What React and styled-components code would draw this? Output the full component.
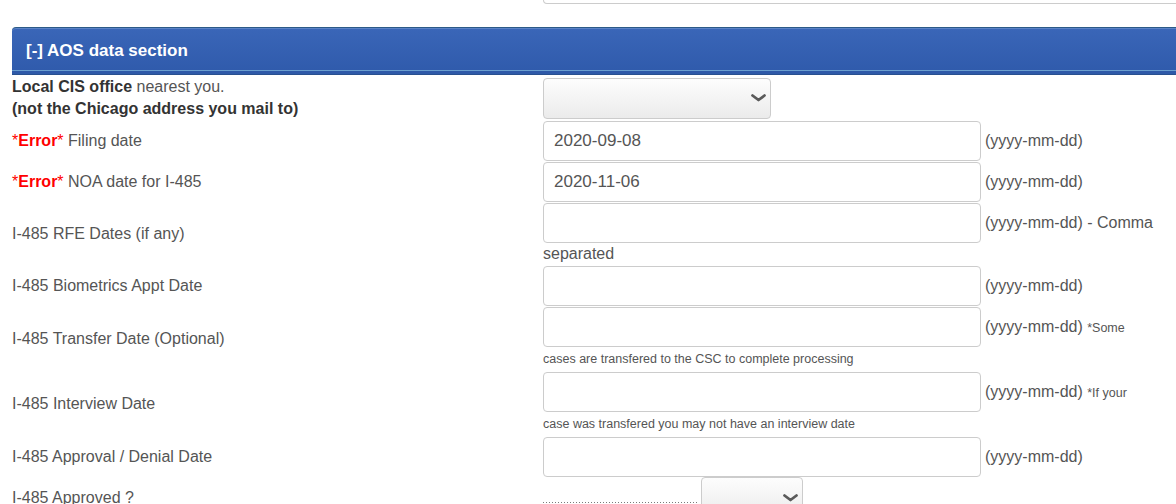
import React from 'react';
import styled, { createGlobalStyle } from 'styled-components';

const GlobalStyle = createGlobalStyle`
  html, body {
    margin: 0;
    padding: 0;
    background: #fff;
    overflow: hidden;
  }
  body {
    font-family: "Liberation Sans", Arial, sans-serif;
    font-size: 16px;
    color: #555;
  }
`;

const Page = styled.div`
  width: 1230px;
  padding-left: 12px;
`;

const PrevRow = styled.div`
  display: flex;
  margin-bottom: 23px;
`;

const PrevBox = styled.div`
  margin-left: 531px;
  flex: 1;
  height: 3px;
  border: 1px solid #ccc;
  border-top: none;
  border-radius: 0 0 0 4px;
`;

const SectionHeader = styled.div`
  box-sizing: border-box;
  height: 48px;
  display: flex;
  align-items: center;
  padding-left: 14px;
  border-radius: 4px 0 0 0;
  border-top: 1px solid #2c5a88;
  border-bottom: 1px solid #28508f;
  background: linear-gradient(to bottom, #3a66b8, #2f5aab);
  box-shadow: inset 0 1px 0 #5b83c6, inset 0 -3px 0 #2e59a8, inset 0 -4px 0 #6a9fcf;
  color: #fff;
  font-size: 17px;
  font-weight: bold;
  margin-bottom: 1px;
`;

const Row = styled.div`
  display: flex;
  align-items: center;
`;

const Label = styled.div`
  width: 531px;
  flex: none;
  font-size: 16px;
  line-height: 22px;
  color: #555;
  b {
    color: #333;
  }
`;

const Err = styled.span`
  color: #f00;
  b {
    color: #f00;
  }
`;

const Field = styled.div`
  flex: 1;
  min-width: 0;
`;

const Line = styled.div`
  display: flex;
  align-items: center;
  height: 41px;
`;

const TextInput = styled.input`
  box-sizing: border-box;
  flex: none;
  width: 438px;
  height: 40px;
  margin: 0;
  padding: 0 10px;
  border: 1px solid #ccc;
  border-radius: 4px;
  background: #fff;
  font-family: "Liberation Sans", Arial, sans-serif;
  font-size: 17px;
  color: #555;
  outline: none;
`;

const Hint = styled.span`
  margin-left: 4px;
  white-space: nowrap;
  font-size: 16px;
  color: #555;
`;

const Small = styled.span`
  font-size: 12.5px;
`;

const Note = styled.div`
  height: ${(p) => (p.$small ? 24 : 22)}px;
  line-height: ${(p) => (p.$small ? 24 : 22)}px;
  font-size: ${(p) => (p.$small ? 12.5 : 16)}px;
  color: #555;
  white-space: nowrap;
`;

const SelectWrap = styled.div`
  position: relative;
  flex: none;
  width: ${(p) => p.$width}px;
  height: 41px;
`;

const Select = styled.select`
  box-sizing: border-box;
  width: 100%;
  height: 100%;
  margin: 0;
  border: 1px solid #ccc;
  border-radius: 4px;
  background: linear-gradient(to bottom, #fdfdfd, #ebebeb);
  appearance: none;
  -webkit-appearance: none;
  font-family: "Liberation Sans", Arial, sans-serif;
  font-size: 16px;
  color: #555;
  outline: none;
`;

const Chevron = styled.svg`
  position: absolute;
  right: 5px;
  top: 50%;
  margin-top: -4px;
  pointer-events: none;
`;

const Dots = styled.span`
  flex: none;
  width: 154px;
  height: 1px;
  margin: 10px 4px 0 0;
  background-image: linear-gradient(to right, #7a7a7a 1px, transparent 1px);
  background-size: 3px 1px;
`;

const DropDown = ({ width }) => (
  <SelectWrap $width={width}>
    <Select defaultValue="">
      <option value=""></option>
    </Select>
    <Chevron width="15" height="8" viewBox="0 0 15 8">
      <path d="M1.5 1.5 L7.5 6 L13.5 1.5" fill="none" stroke="#5a5a5a" strokeWidth="2.8" strokeLinecap="round" strokeLinejoin="round" />
    </Chevron>
  </SelectWrap>
);

const DateRow = ({ label, value, hint, note, smallNote }) => (
  <Row>
    <Label>{label}</Label>
    <Field>
      <Line>
        <TextInput type="text" defaultValue={value} />
        <Hint>{hint || '(yyyy-mm-dd)'}</Hint>
      </Line>
      {note && <Note $small={smallNote}>{note}</Note>}
    </Field>
  </Row>
);

const ErrorMark = () => (
  <Err>
    *<b>Error</b>*
  </Err>
);

const App = () => {
  return (
    <Page>
      <GlobalStyle />
      <PrevRow>
        <PrevBox />
      </PrevRow>
      <SectionHeader>[-] AOS data section</SectionHeader>

      <Row>
        <Label>
          <b>Local CIS office</b> nearest you.
          <br />
          <b>(not the Chicago address you mail to)</b>
        </Label>
        <Field>
          <Line>
            <DropDown width={228} />
          </Line>
        </Field>
      </Row>

      <DateRow label={<><ErrorMark /> Filing date</>} value="2020-09-08" />
      <DateRow label={<><ErrorMark /> NOA date for I-485</>} value="2020-11-06" />
      <DateRow label="I-485 RFE Dates (if any)" hint="(yyyy-mm-dd) - Comma" note="separated" />
      <DateRow label="I-485 Biometrics Appt Date" />
      <DateRow
        label="I-485 Transfer Date (Optional)"
        hint={<>(yyyy-mm-dd) <Small>*Some</Small></>}
        note="cases are transfered to the CSC to complete processing"
        smallNote
      />
      <DateRow
        label="I-485 Interview Date"
        hint={<>(yyyy-mm-dd) <Small>*If your</Small></>}
        note="case was transfered you may not have an interview date"
        smallNote
      />
      <DateRow label="I-485 Approval / Denial Date" />

      <Row>
        <Label>I-485 Approved ?</Label>
        <Field>
          <Line>
            <Dots />
            <DropDown width={102} />
          </Line>
        </Field>
      </Row>
    </Page>
  );
};

export default App;
